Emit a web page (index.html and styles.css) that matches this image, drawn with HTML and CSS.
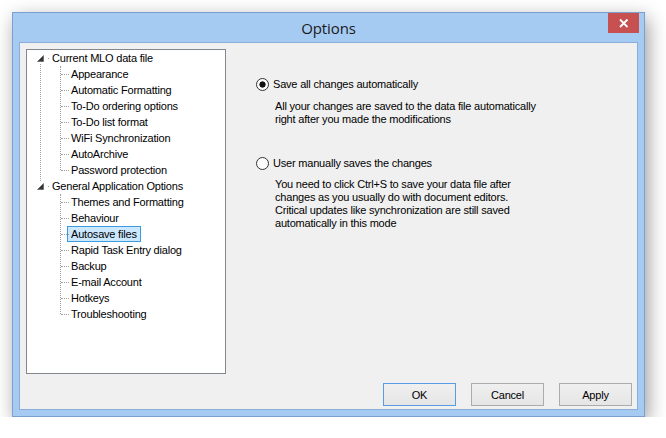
FILE: index.html
```html
<!DOCTYPE html>
<html lang="en">
<head>
    <meta charset="UTF-8">
    <title>Options</title>
    <link rel="stylesheet" href="styles.css">
</head>
<body>
    <div class="window">
        <div class="titlebar">
            <span></span>
            <span class="title">Options</span>
            <button class="close">
                <svg width="31" height="20" viewBox="0 0 31 20">
                    <path d="M12 6.5 L19.5 14 M19.5 6.5 L12 14" stroke="#fff" stroke-width="1.8" fill="none"/>
                </svg>
            </button>
        </div>
        <div class="client">
            <div class="main">
                <div class="tree">
                    <ul class="roots">
                        <li class="root">
                            <div class="row">
                                <svg class="twisty" width="7" height="7" viewBox="0 0 7 7"><path d="M6.5 0.5 L6.5 6.5 L0.5 6.5 Z" fill="#333" stroke="#555" stroke-width="0.6"/></svg>
                                <span class="tick"></span>
                                <span>Current MLO data file</span>
                            </div>
                            <ul class="children">
                                <li><span class="label">Appearance</span></li>
                                <li><span class="label">Automatic Formatting</span></li>
                                <li><span class="label">To-Do ordering options</span></li>
                                <li><span class="label">To-Do list format</span></li>
                                <li><span class="label">WiFi Synchronization</span></li>
                                <li><span class="label">AutoArchive</span></li>
                                <li><span class="label">Password protection</span></li>
                            </ul>
                        </li>
                        <li class="root">
                            <div class="row">
                                <svg class="twisty" width="7" height="7" viewBox="0 0 7 7"><path d="M6.5 0.5 L6.5 6.5 L0.5 6.5 Z" fill="#333" stroke="#555" stroke-width="0.6"/></svg>
                                <span class="tick"></span>
                                <span>General Application Options</span>
                            </div>
                            <ul class="children">
                                <li><span class="label">Themes and Formatting</span></li>
                                <li><span class="label">Behaviour</span></li>
                                <li><span class="label selected">Autosave files</span></li>
                                <li><span class="label">Rapid Task Entry dialog</span></li>
                                <li><span class="label">Backup</span></li>
                                <li><span class="label">E-mail Account</span></li>
                                <li><span class="label">Hotkeys</span></li>
                                <li><span class="label">Troubleshooting</span></li>
                            </ul>
                        </li>
                    </ul>
                </div>

                <div class="panel">
                    <div class="option">
                        <div class="choice"><span class="radio checked"></span>Save all changes automatically</div>
                        <p class="desc">All your changes are saved to the data file automatically<br>right after you made the modifications</p>
                    </div>
                    <div class="option second">
                        <div class="choice"><span class="radio"></span>User manually saves the changes</div>
                        <p class="desc">You need to click Ctrl+S to save your data file after<br>changes as you usually do with document editors.<br>Critical updates like synchronization are still saved<br>automatically in this mode</p>
                    </div>
                </div>
            </div>

            <div class="buttons">
                <button class="btn default">OK</button>
                <button class="btn">Cancel</button>
                <button class="btn">Apply</button>
            </div>
        </div>
    </div>
</body>
</html>
```

FILE: styles.css
```css
body {
    margin: 0;
    padding: 12px 0 0 12px;
    background: #fff;
    font-family: "Liberation Sans", Arial, sans-serif;
    font-size: 11px;
    letter-spacing: -0.2px;
    color: #000;
}
.window {
    box-sizing: border-box;
    width: 633px;
    height: 405px;
    background: #a6cbf3;
    border: 1px solid #7b9fce;
    padding: 0 6px 6px 6px;
    display: flex;
    flex-direction: column;
    box-shadow: 3px 6px 18px rgba(0, 0, 0, 0.4);
}
.titlebar {
    height: 29px;
    display: grid;
    grid-template-columns: 1fr auto 1fr;
    align-items: center;
}
.title {
    font-family: "Open Sans", "Noto Sans", sans-serif;
    font-size: 15px;
    letter-spacing: -0.1px;
    color: #1a1a1a;
    padding-top: 1px;
}
.close {
    justify-self: end;
    align-self: start;
    width: 31px;
    height: 20px;
    margin-right: -1px;
    padding: 0;
    border: none;
    background: #c75050;
    display: block;
}
.close svg {
    display: block;
}
.client {
    flex: 1;
    background: #f0f0f0;
    border: 1px solid #89acd9;
    padding: 6px 5px 3px 6px;
    display: flex;
    flex-direction: column;
}
.main {
    display: flex;
    height: 325px;
}

/* tree */
.tree {
    box-sizing: border-box;
    width: 200px;
    height: 325px;
    background: #fff;
    border: 1px solid #828790;
    white-space: nowrap;
}
.tree ul {
    list-style: none;
    margin: 0;
    padding: 0;
}
.root {
    position: relative;
}
.root:first-child::after {
    content: '';
    position: absolute;
    left: 13px;
    top: 14px;
    bottom: -3px;
    border-left: 1px dotted #a0a0a0;
}
.row {
    height: 16px;
    line-height: 17px;
    display: flex;
    align-items: center;
    padding-left: 10px;
}
.twisty {
    display: block;
}
.tick {
    width: 1px;
    height: 1px;
    background: #a0a0a0;
    margin: 0 3px 0 4px;
}
.children {
    position: relative;
    margin-left: 33px !important;
}
.children::before {
    content: '';
    position: absolute;
    left: 0;
    top: 0;
    bottom: 8px;
    border-left: 1px dotted #a0a0a0;
}
.children li {
    position: relative;
    height: 16px;
    padding-left: 7px;
}
.children li::before {
    content: '';
    position: absolute;
    left: 1px;
    top: 8px;
    width: 8px;
    border-top: 1px dotted #a0a0a0;
}
.label {
    display: inline-block;
    height: 14px;
    line-height: 15px;
    padding: 0 3px;
    border: 1px solid transparent;
}
.label.selected {
    background: #cce8ff;
    border-color: #3d9be0;
}

/* right panel */
.panel {
    padding: 28px 0 0 30px;
}
.choice {
    height: 14px;
    line-height: 14px;
    display: flex;
    align-items: center;
}
.radio {
    box-sizing: border-box;
    width: 13px;
    height: 13px;
    border: 1px solid #333;
    border-radius: 50%;
    background: #fdfdfd;
    margin-right: 4px;
}
.radio.checked {
    background: radial-gradient(circle, #111 0 2.8px, #fdfdfd 3.4px);
}
.desc {
    margin: 9px 0 0 19px;
    line-height: 13px;
    white-space: nowrap;
}
.option.second {
    margin-top: 30px;
}
.option.second .desc {
    margin-top: 8px;
}

/* buttons */
.buttons {
    margin-top: 9px;
    display: flex;
    justify-content: flex-end;
    gap: 15px;
}
.btn {
    box-sizing: border-box;
    width: 73px;
    height: 23px;
    border: 1px solid #acacac;
    background: linear-gradient(#f0f0f0, #e5e5e5);
    font-family: "Liberation Sans", Arial, sans-serif;
    font-size: 11px;
    letter-spacing: -0.2px;
    color: #000;
    padding: 0;
}
.btn.default {
    border-color: #569de5;
}
```
